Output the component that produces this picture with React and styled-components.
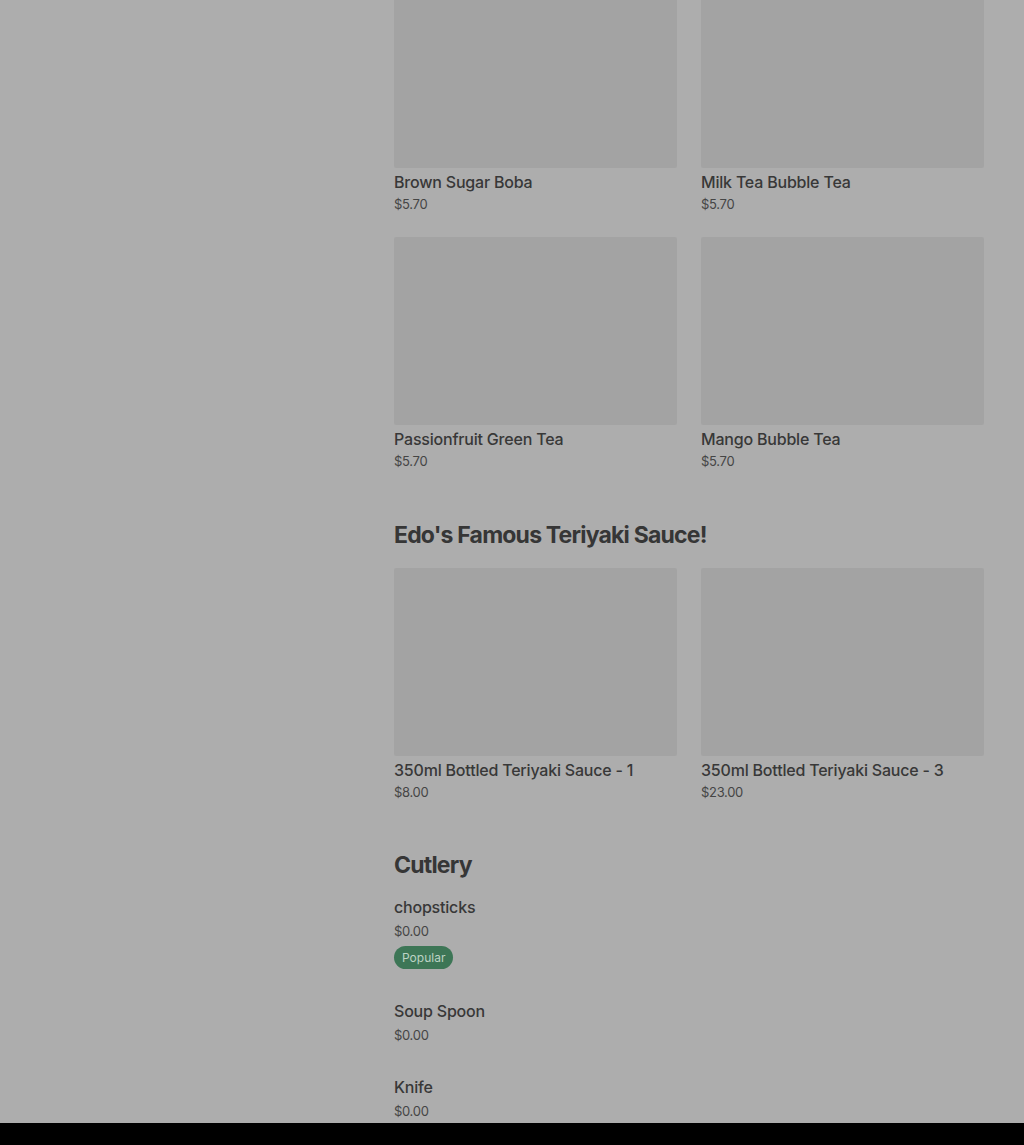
import React from "react";
import styled, { createGlobalStyle } from "styled-components";

const Global = createGlobalStyle`
  html, body { margin: 0; padding: 0; background: #adadad; }
  body { font-family: Inter, "Noto Sans", sans-serif; color: #383838; }
  * { box-sizing: border-box; }
`;

const Page = styled.div`
  display: flex;
  flex-direction: column;
  height: 1145px;
  overflow: hidden;
`;

const Viewport = styled.div`
  height: 1123px;
  overflow: hidden;
  background: #adadad;
`;

const Layout = styled.div`
  display: grid;
  grid-template-columns: 394px 590px;
  margin-top: -20px;
`;

const Sidebar = styled.aside``;

const Main = styled.main`
  display: flex;
  flex-direction: column;
`;

const Section = styled.section`
  display: flex;
  flex-direction: column;
  margin-top: ${(p) => p.$top || 0}px;
`;

const Heading = styled.h2`
  margin: 0 0 ${(p) => p.$gap || 17}px;
  font-family: Inter, sans-serif;
  font-size: 23px;
  line-height: 32px;
  font-weight: 700;
  letter-spacing: -0.8px;
  color: #363636;
`;

const Grid = styled.div`
  display: grid;
  grid-template-columns: 283px 283px;
  column-gap: 24px;
  row-gap: 25px;
`;

const Card = styled.div`
  display: flex;
  flex-direction: column;
`;

const Thumb = styled.div`
  height: 188px;
  background: #a3a3a3;
  border-radius: 2px;
`;

const Name = styled.div`
  margin-top: ${(p) => (p.$list ? 0 : 4)}px;
  font-size: 16px;
  line-height: 20px;
  font-weight: 500;
  letter-spacing: -0.2px;
  color: #383838;
`;

const Price = styled.div`
  margin-top: ${(p) => (p.$list ? 4 : 4)}px;
  font-size: 13px;
  line-height: ${(p) => (p.$list ? 20 : 16)}px;
  font-weight: 400;
  letter-spacing: -0.3px;
  color: #454545;
`;

const List = styled.div`
  display: flex;
  flex-direction: column;
  gap: 32px;
`;

const ListItem = styled.div`
  display: flex;
  flex-direction: column;
  align-items: flex-start;
`;

const Badge = styled.span`
  margin-top: 5px;
  display: inline-flex;
  align-items: center;
  height: 23px;
  padding: 0 8px;
  border-radius: 12px;
  background: #3d7656;
  color: #bcd3c4;
  font-size: 12px;
  font-weight: 400;
`;

const BottomBar = styled.div`
  height: 22px;
  background: #000;
`;

const teas = [
  ["Brown Sugar Boba", "$5.70"],
  ["Milk Tea Bubble Tea", "$5.70"],
  ["Passionfruit Green Tea", "$5.70"],
  ["Mango Bubble Tea", "$5.70"],
];

const sauces = [
  ["350ml Bottled Teriyaki Sauce - 1", "$8.00"],
  ["350ml Bottled Teriyaki Sauce - 3", "$23.00"],
];

const cutlery = [
  ["chopsticks", "$0.00", true],
  ["Soup Spoon", "$0.00"],
  ["Knife", "$0.00"],
];

const CardGrid = ({ items }) => (
  <Grid>
    {items.map(([n, p]) => (
      <Card key={n}>
        <Thumb />
        <Name>{n}</Name>
        <Price>{p}</Price>
      </Card>
    ))}
  </Grid>
);

export default function App() {
  return (
    <Page>
      <Global />
      <Viewport>
        <Layout>
          <Sidebar />
          <Main>
            <Section>
              <CardGrid items={teas} />
            </Section>
            <Section $top={50}>
              <Heading>Edo's Famous Teriyaki Sauce!</Heading>
              <CardGrid items={sauces} />
            </Section>
            <Section $top={49}>
              <Heading $gap={16}>Cutlery</Heading>
              <List>
                {cutlery.map(([n, p, pop]) => (
                  <ListItem key={n}>
                    <Name $list>{n}</Name>
                    <Price $list>{p}</Price>
                    {pop && <Badge>Popular</Badge>}
                  </ListItem>
                ))}
              </List>
            </Section>
          </Main>
        </Layout>
      </Viewport>
      <BottomBar />
    </Page>
  );
}
